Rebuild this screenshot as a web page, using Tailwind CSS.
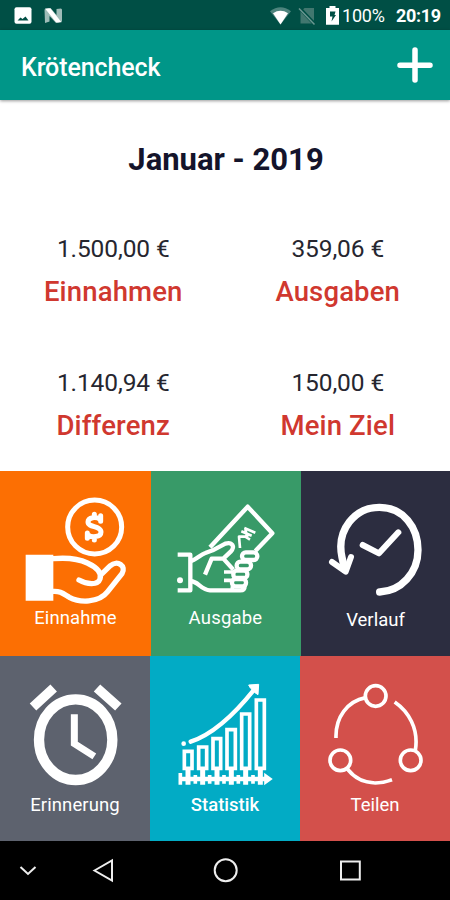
<!DOCTYPE html>
<html lang="de">
<head>
    <meta charset="UTF-8">
    <meta name="viewport" content="width=device-width, initial-scale=1.0">
    <title>Krötencheck</title>
    <script src="https://cdn.jsdelivr.net/npm/@tailwindcss/browser@4"></script>
</head>
<body class="w-[450px] h-[900px] overflow-hidden flex flex-col bg-white font-[Roboto,'Liberation_Sans',sans-serif]">

    <!-- status bar -->
    <div class="h-[30px] shrink-0 flex items-center bg-[#004f45] text-white">
        <svg class="w-[70px] h-[30px]" viewBox="0 0 70 30">
            <rect x="14.5" y="7.3" width="17" height="16.5" rx="2" fill="#fff"/>
            <path d="M17.500 20.500l3-3 2 1.500 3-2.500 3 4z" fill="#004f45"/>
            <path d="M44.500 9.500l4-1.500h2l6 7v-6l4.500-.5 1 1v12l-4 1.500h-2l-6.500-7v5.500l-4.500 1.500z" fill="#9fbcb8"/>
            <path d="M45 8.500h5.500L61.500 22.300H56z" fill="#fff"/>
        </svg>
        <svg class="w-[73px] h-[30px] ml-[199px]" viewBox="269 0 73 30">
            <path d="M270 11.300Q280.500 3 291 11.300L280.500 24.500z" fill="#4d847d"/>
            <path d="M273 13.200Q280.500 8.500 288 13.200L280.500 24.500z" fill="#fff"/>
            <path d="M304.500 8h9.500v15.500h-13.500V12z" fill="#41776f"/>
            <path d="M299.500 8l15.500 16.500" stroke="#004f45" stroke-width="3.500"/>
            <path d="M299 8.500l15.500 16" stroke="#6b9791" stroke-width="1.500"/>
            <path d="M329.500 6h6v2h3.500v16.800h-13V8h3.500z" fill="#fff"/>
            <path d="M330 11.500h5.500l-1 3.500h1.500l-4.500 6.500 1-5h-2.500z" fill="#004f45"/>
        </svg>
        <span class="w-[54px] text-[18px] leading-[32px] pt-[2px] tracking-[-0.2px] whitespace-nowrap">100%</span>
        <span class="text-[18px] leading-[32px] pt-[2px] font-bold tracking-[-0.3px] whitespace-nowrap">20:19</span>
    </div>

    <!-- app bar -->
    <div class="h-[70px] shrink-0 flex items-center justify-between pl-[21px] pr-[16px] bg-[#009688] shadow-[0_1px_3px_rgba(0,0,0,0.4)] z-10">
        <h1 class="text-[25px] leading-[36px] pt-[5px] font-medium tracking-[-0.1px] text-white">Krötencheck</h1>
        <svg class="w-[38px] h-[38px]" viewBox="0 0 38 38">
            <path d="M19 4v30M4 19.300h30" stroke="#fff" stroke-width="5.500" stroke-linecap="round"/>
        </svg>
    </div>

    <!-- overview -->
    <div class="h-[371px] shrink-0 pt-[40px] text-center">
        <h2 class="text-[31px] leading-[40px] font-bold text-[#14142b] pl-[2px]">Januar - 2019</h2>
        <div class="grid grid-cols-2 gap-y-[50px] mt-[49px] pl-[1px]">
            <div>
                <p class="text-[24.5px] leading-[39px] tracking-[-0.1px] text-[#26262f]">1.500,00 €</p>
                <p class="text-[27.5px] leading-[45px] pt-px -mb-px font-medium tracking-[0.15px] text-[#d0382f]">Einnahmen</p>
            </div>
            <div>
                <p class="text-[24.5px] leading-[39px] tracking-[-0.1px] text-[#26262f]">359,06 €</p>
                <p class="text-[27.5px] leading-[45px] pt-px -mb-px font-medium tracking-[0.15px] text-[#d0382f]">Ausgaben</p>
            </div>
            <div>
                <p class="text-[24.5px] leading-[39px] tracking-[-0.1px] text-[#26262f]">1.140,94 €</p>
                <p class="text-[27.5px] leading-[45px] pt-px -mb-px font-medium tracking-[0.15px] text-[#d0382f]">Differenz</p>
            </div>
            <div>
                <p class="text-[24.5px] leading-[39px] tracking-[-0.1px] text-[#26262f]">150,00 €</p>
                <p class="text-[27.5px] leading-[45px] pt-px -mb-px font-medium tracking-[0.15px] text-[#d0382f]">Mein Ziel</p>
            </div>
        </div>
    </div>

    <!-- tiles -->
    <div class="h-[185px] shrink-0 flex text-center text-[18.5px] leading-[26px] text-white">
        <div class="w-[151px] bg-[#fc6f03]">
            <svg class="w-[151px] h-[134px]" viewBox="0 3 453 402" fill="none" stroke="#fff" stroke-linecap="round" stroke-linejoin="round">
                <circle cx="284" cy="171" r="81" stroke-width="15"/>
                <path d="M302 137V154M262 189V205M301 149C290 139 264 141 264 156C264 173 303 167 303 186C303 203 273 203 264 194M283 133V142M283 201V210" stroke-width="15"/>
                <path d="M77 254h83v138H77z" fill="#fff" stroke="none"/>
                <path d="M160 266C205 262 235 266 262 279C292 293 306 309 300 327C293 347 260 343 237 330M304 313L331 287C352 269 380 288 366 311L323 365C296 400 238 398 208 382C188 370 180 363 160 364" stroke-width="16"/>
            </svg>
            <p class="tracking-[0.1px]">Einnahme</p>
        </div>
        <div class="w-[150px] bg-[#389a68]">
            <svg class="w-[150px] h-[134px]" viewBox="3 3 450 402" fill="none" stroke="#fff" stroke-width="13" stroke-linejoin="round">
                <path d="M180 232L293 110L367 190L316 243"/>
                <path d="M83 254h38v107H83"/>
                <circle cx="90" cy="331" r="9" fill="#fff" stroke="none"/>
                <path d="M121 273C138 271 150 254 166 249L188 241L226 221C247 215 256 230 242 245L220 266H185L165 314M220 266L250 299"/>
                <path d="M121 334C143 331 153 361 180 361H271Q284 361 284 347"/>
                <rect x="276" y="247" width="46" height="23" rx="11"/>
                <rect x="260" y="275" width="43" height="23" rx="11"/>
                <rect x="250" y="302" width="42" height="22" rx="10"/>
                <rect x="246" y="327" width="42" height="22" rx="10"/>
                <path d="M222 306h30M222 331h30M247 349v12" stroke-width="11"/>
                <path d="M270 234L267 200L286 200L300 209M274 184L305 197M283 174L316 188M286 178L292 202" stroke-width="8"/>
            </svg>
            <p class="tracking-[0.2px] pr-px">Ausgabe</p>
        </div>
        <div class="w-[149px] bg-[#2c2d40]">
            <svg class="w-[149px] h-[136px]" viewBox="3 3 447 408" fill="none" stroke="#fff" stroke-width="22" stroke-linecap="round" stroke-linejoin="round">
                <path d="M134 298L126 262C108 180 165 112 238 112C311 112 354 173 354 240C354 309 303 363 239 366"/>
                <path d="M96 276L137 305L153 261" stroke-width="18"/>
                <path d="M188 225L237 250L295 187" stroke-width="18"/>
            </svg>
            <p>Verlauf</p>
        </div>
    </div>
    <div class="h-[185px] shrink-0 flex text-center text-[18.5px] leading-[26px] text-white">
        <div class="w-[150px] bg-[#5d626e]">
            <svg class="w-[150px] h-[136px]" viewBox="0 3 450 408" fill="none" stroke="#fff">
                <ellipse cx="227" cy="254" rx="110" ry="121" stroke-width="31"/>
                <path d="M99 156L161 99M291 99L355 156" stroke-width="29"/>
                <path d="M223 178V266L283 304" stroke-width="21"/>
            </svg>
            <p class="tracking-[0.1px]">Erinnerung</p>
        </div>
        <div class="w-[150px] bg-[#02abc5]">
            <svg class="w-[150px] h-[136px]" viewBox="1 3 450 408" fill="none" stroke="#fff">
                <circle cx="102" cy="266" r="7" fill="#fff" stroke="none"/>
                <path d="M123 260Q213 230 314 103" stroke-width="13" stroke-linecap="round"/>
                <path d="M297 90L327 88L325 119L316 113L302 99z" fill="#fff" stroke-width="3"/>
                <path d="M104 289h23v51h-23zM147 276h24v64h-24zM190 251h23v89h-23zM232 224h25v116h-25zM276 177h24v163h-24zM320 135h24v205h-24z" stroke-width="11"/>
                <path d="M92 372H355" stroke-width="13"/>
                <path d="M92 354v35M137 360v26M180 360v26M223 360v26M266 360v26M310 360v26" stroke-width="11"/>
                <path d="M115 342v47M159 342v47M202 342v47M245 342v47M288 342v47M332 342v47" stroke-width="15"/>
                <path d="M346 358L365 372L346 386z" fill="#fff" stroke-width="5"/>
            </svg>
            <p class="font-medium">Statistik</p>
        </div>
        <div class="w-[150px] bg-[#d3504b]">
            <svg class="w-[150px] h-[136px]" viewBox="0 3 450 408" fill="none" stroke="#fff" stroke-width="11">
                <circle cx="227" cy="123" r="31"/>
                <circle cx="121" cy="316" r="31"/>
                <circle cx="332" cy="316" r="31"/>
                <path d="M108 249C106 186 142 139 197 128M284 141C325 169 357 221 346 286M142 342C174 382 221 394 276 374"/>
            </svg>
            <p>Teilen</p>
        </div>
    </div>

    <!-- navigation bar -->
    <div class="h-[59px] shrink-0 bg-black">
        <svg class="w-[450px] h-[59px]" viewBox="0 841 450 59" fill="none" stroke="#eee" stroke-width="2">
            <path d="M20.500 867L28 874L35.500 867"/>
            <path d="M94.500 870.500L112 860.500V880.500z"/>
            <circle cx="225.700" cy="870.300" r="11"/>
            <rect x="341" y="861.500" width="18.800" height="18"/>
        </svg>
    </div>
</body>
</html>
